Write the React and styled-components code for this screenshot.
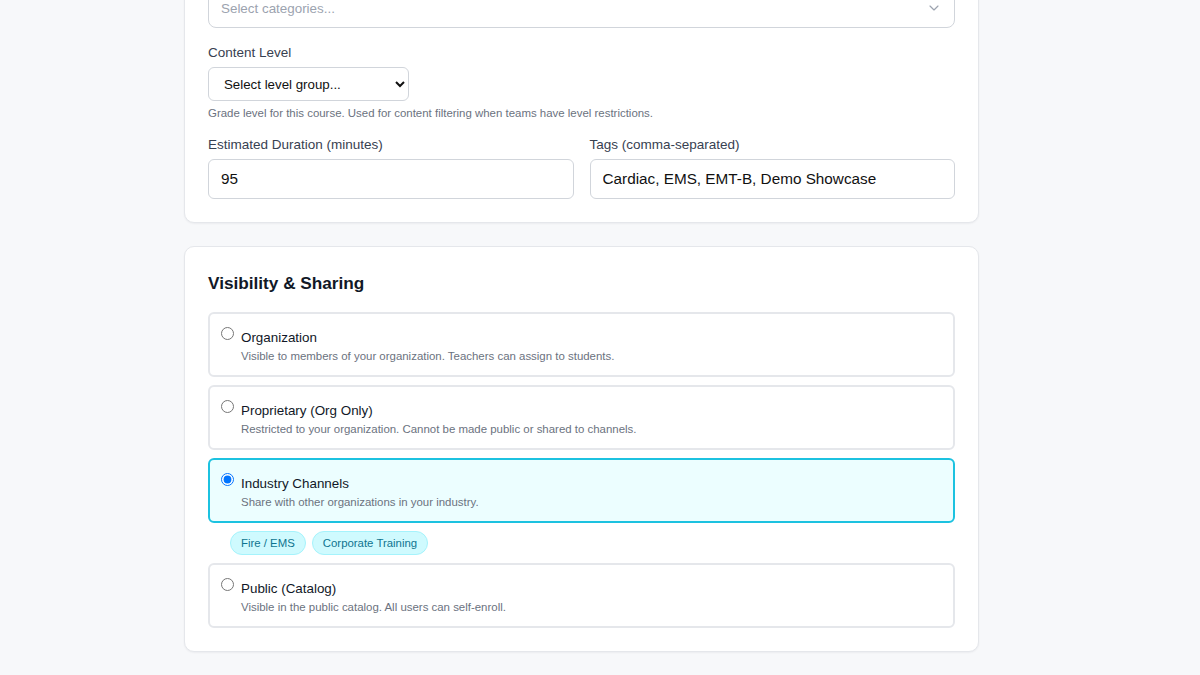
import React from 'react'
import styled, { createGlobalStyle } from 'styled-components'
import { ChevronDown } from 'lucide-react'

const visibilityOptions = [
  {
    id: 'organization',
    title: 'Organization',
    description: 'Visible to members of your organization. Teachers can assign to students.',
  },
  {
    id: 'proprietary',
    title: 'Proprietary (Org Only)',
    description: 'Restricted to your organization. Cannot be made public or shared to channels.',
  },
  {
    id: 'channels',
    title: 'Industry Channels',
    description: 'Share with other organizations in your industry.',
  },
  {
    id: 'public',
    title: 'Public (Catalog)',
    description: 'Visible in the public catalog. All users can self-enroll.',
  },
]

const channels = ['Fire / EMS', 'Corporate Training']

export default function App() {
  const selected = 'channels'

  return (
    <>
      <GlobalStyle />
      <Page>

        <Card>
          <Field>
            <Label>Categories</Label>
            <MultiSelect>
              <Placeholder>Select categories...</Placeholder>
              <ChevronDown size={16} color="#9ca3af" strokeWidth={1.75} />
            </MultiSelect>
          </Field>

          <Field>
            <Label>Content Level</Label>
            <LevelSelect defaultValue="">
              <option value="">Select level group...</option>
              <option value="k5">Elementary</option>
              <option value="ms">Middle School</option>
              <option value="hs">High School</option>
            </LevelSelect>
            <Help>Grade level for this course. Used for content filtering when teams have level restrictions.</Help>
          </Field>

          <Row>
            <Field last>
              <Label>Estimated Duration (minutes)</Label>
              <TextInput defaultValue="95" />
            </Field>
            <Field last>
              <Label>Tags (comma-separated)</Label>
              <TextInput defaultValue="Cardiac, EMS, EMT-B, Demo Showcase" />
            </Field>
          </Row>
        </Card>

        <Card>
          <Heading>Visibility &amp; Sharing</Heading>
          <OptionList>
            {visibilityOptions.map(opt => (
              <React.Fragment key={opt.id}>
                <Option active={opt.id === selected}>
                  <Radio type="radio" name="visibility" defaultChecked={opt.id === selected} />
                  <OptionText>
                    <OptionTitle>{opt.title}</OptionTitle>
                    <OptionDesc>{opt.description}</OptionDesc>
                  </OptionText>
                </Option>
                {opt.id === 'channels' && opt.id === selected && (
                  <ChipRow>
                    {channels.map(c => <Chip key={c}>{c}</Chip>)}
                  </ChipRow>
                )}
              </React.Fragment>
            ))}
          </OptionList>
        </Card>

        <Card>
          <Heading>Publishing</Heading>
        </Card>

      </Page>
    </>
  )
}

// Styles
const GlobalStyle = createGlobalStyle`
  * { box-sizing: border-box; }
  html, body {
    margin: 0;
    background: #f7f8fa;
    font-family: "Liberation Sans", Arial, sans-serif;
    color: #111827;
  }
`

const Page = styled.div`
  width: 795px;
  margin: -59px 0 0 184px;
  display: flex;
  flex-direction: column;
  gap: 23px;
  padding-bottom: 40px;
`

const Card = styled.section`
  background: #fff;
  border: 1px solid #e5e7eb;
  border-radius: 10px;
  box-shadow: 0 1px 2px rgba(15, 23, 42, 0.05);
  padding: 23px;
`

const Field = styled.div`
  display: flex;
  flex-direction: column;
  margin-bottom: ${p => (p.last ? '0' : '16px')};
`

const Row = styled.div`
  display: grid;
  grid-template-columns: 1fr 1fr;
  gap: 16px;
`

const Label = styled.label`
  font-size: 13.5px;
  line-height: 17px;
  color: #374151;
  margin-bottom: 6px;
`

const MultiSelect = styled.div`
  height: 40px;
  border: 1px solid #d1d5db;
  border-radius: 8px;
  display: flex;
  align-items: center;
  justify-content: space-between;
  padding: 0 12px 0 12px;
`

const Placeholder = styled.span`
  font-size: 13.4px;
  color: #9ca3af;
`

const LevelSelect = styled.select`
  width: 201px;
  height: 34px;
  font-family: "Liberation Sans", Arial, sans-serif;
  font-size: 13.3px;
  color: #111;
  background: #fff;
  border: 1px solid #d1d5db;
  border-radius: 6px;
  padding: 0 6px 0 11px;
`

const Help = styled.p`
  margin: 5px 0 0;
  font-size: 11.45px;
  line-height: 14px;
  color: #6b7280;
`

const TextInput = styled.input`
  height: 40px;
  width: 100%;
  font-family: "Liberation Sans", Arial, sans-serif;
  font-size: 15.3px;
  color: #111;
  border: 1px solid #d1d5db;
  border-radius: 6px;
  padding: 0 12px;
  outline: none;
`

const Heading = styled.h2`
  margin: 0 0 16px;
  font-size: 17.2px;
  line-height: 26px;
  font-weight: 700;
  color: #111827;
`

const OptionList = styled.div`
  display: flex;
  flex-direction: column;
  gap: 8px;
`

const Option = styled.label`
  display: flex;
  align-items: flex-start;
  gap: 7px;
  padding: 14px 12px 11px 11px;
  border: 2px solid ${p => (p.active ? '#1cc2e0' : '#e5e7eb')};
  background: ${p => (p.active ? '#ecfeff' : '#fff')};
  border-radius: 6px;
  cursor: pointer;
`

const Radio = styled.input`
  width: 13px;
  height: 13px;
  margin: -1px 0 0;
  flex-shrink: 0;
`

const OptionText = styled.div`
  display: flex;
  flex-direction: column;
  gap: 1px;
`

const OptionTitle = styled.span`
  font-size: 13.4px;
  line-height: 20px;
  color: #111827;
`

const OptionDesc = styled.span`
  font-size: 11.45px;
  line-height: 15px;
  color: #6b7280;
`

const ChipRow = styled.div`
  display: flex;
  gap: 6px;
  padding-left: 22px;
`

const Chip = styled.span`
  height: 24px;
  display: inline-flex;
  align-items: center;
  padding: 0 10px;
  border-radius: 999px;
  background: #cffafe;
  border: 1px solid #a5f3fc;
  color: #0e7490;
  font-size: 11.4px;
`
